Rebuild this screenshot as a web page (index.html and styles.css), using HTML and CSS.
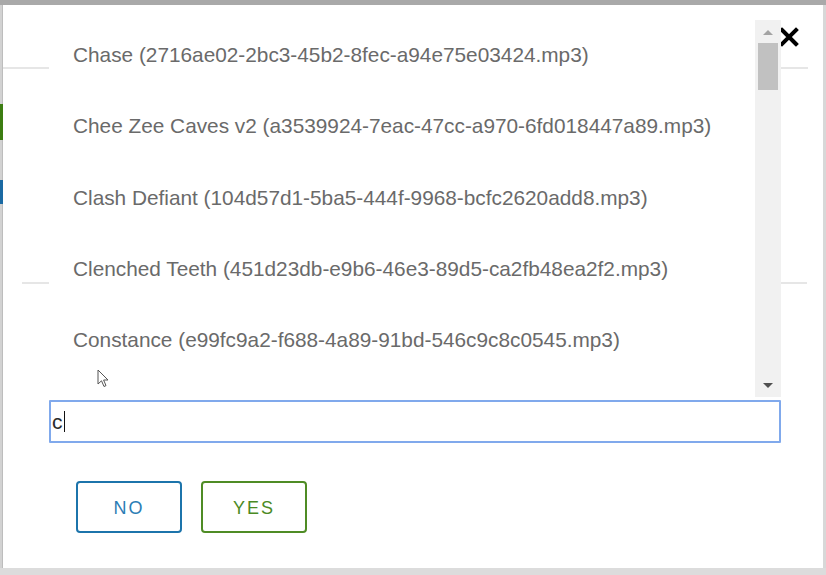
FILE: index.html
```html
<!DOCTYPE html>
<html lang="en">
<head>
<meta charset="utf-8">
<title>Select track</title>
<link rel="stylesheet" href="styles.css">
</head>
<body>
<div class="screen">
  <div class="edge edge-left">
    <span class="mark mark-green"></span>
    <span class="mark mark-blue"></span>
  </div>
  <div class="modal">
    <span class="rule rule-l1"></span>
    <span class="rule rule-l2"></span>
    <span class="rule rule-r1"></span>
    <span class="rule rule-r2"></span>
    <button class="close" aria-label="Close">
      <svg width="20" height="20" viewBox="0 0 20 20"><path d="M3 3 L17 17 M17 3 L3 17" stroke="#000" stroke-width="4" stroke-linecap="square" fill="none"/></svg>
    </button>
    <div class="listbox">
      <ul class="options">
        <li>Chase (2716ae02-2bc3-45b2-8fec-a94e75e03424.mp3)</li>
        <li>Chee Zee Caves v2 (a3539924-7eac-47cc-a970-6fd018447a89.mp3)</li>
        <li>Clash Defiant (104d57d1-5ba5-444f-9968-bcfc2620add8.mp3)</li>
        <li>Clenched Teeth (451d23db-e9b6-46e3-89d5-ca2fb48ea2f2.mp3)</li>
        <li>Constance (e99fc9a2-f688-4a89-91bd-546c9c8c0545.mp3)</li>
      </ul>
      <div class="scrollbar">
        <span class="arrow arrow-up"></span>
        <span class="thumb"></span>
        <span class="spacer"></span>
        <span class="arrow arrow-down"></span>
      </div>
    </div>
    <div class="search">c<span class="caret"></span></div>
    <div class="actions">
      <button class="btn btn-no">NO</button>
      <button class="btn btn-yes">YES</button>
    </div>
    <svg class="cursor" width="14" height="20" viewBox="0 0 14 20"><path d="M1 1 L1 15 L4.5 11.8 L7 17.5 L9 16.6 L6.6 11 L11 11 Z" fill="#fff" stroke="#555" stroke-width="1" stroke-linejoin="round"/></svg>
  </div>
  <div class="edge edge-right"></div>
</div>
</body>
</html>
```

FILE: styles.css
```css
html, body {
  margin: 0;
  padding: 0;
}
body {
  width: 826px;
  height: 575px;
  overflow: hidden;
  font-family: "Liberation Sans", Arial, sans-serif;
}
.screen {
  box-sizing: border-box;
  width: 826px;
  height: 575px;
  display: flex;
  background: #dcdcdc;
  border-top: 5px solid #a9a9a9;
  padding-bottom: 7px;
}
.edge {
  width: 3px;
  background: #d2d2d2;
  position: relative;
}
.edge-left {
  border-right: 1px solid #bdbdbd;
  width: 2px;
}
.edge-right {
  background: #d8d8d8;
}
.mark {
  position: absolute;
  left: 0;
  width: 3px;
}
.mark-green {
  top: 99px;
  height: 36px;
  background: #3c7d12;
}
.mark-blue {
  top: 175px;
  height: 24px;
  background: #1b6aa3;
}
.modal {
  flex: 1;
  background: #fff;
  position: relative;
  padding: 13px 42px 0 46px;
}
.rule {
  position: absolute;
  height: 2px;
  background: #e6e6e6;
}
.rule-l1 { top: 62px; left: 0; width: 46px; }
.rule-l2 { top: 277px; left: 19px; width: 27px; }
.rule-r1 { top: 62px; left: 778px; width: 27px; }
.rule-r2 { top: 277px; left: 778px; width: 26px; }
.close {
  position: absolute;
  top: 21px;
  left: 775px;
  width: 22px;
  height: 22px;
  padding: 1px;
  border: 0;
  background: transparent;
}
.listbox {
  position: relative;
  height: 379px;
  display: flex;
  background: #fff;
}
.options {
  list-style: none;
  margin: 0;
  padding: 1px 0 0 0;
  flex: 1;
  overflow: hidden;
}
.options li {
  height: 71.25px;
  line-height: 71.25px;
  padding-left: 24px;
  font-size: 20.8px;
  color: #6a6a6a;
  white-space: nowrap;
}
.scrollbar {
  width: 26px;
  background: #f1f1f1;
  display: flex;
  flex-direction: column;
  align-items: center;
  margin-top: 2px;
}
.arrow {
  width: 0;
  height: 0;
  border-left: 5px solid transparent;
  border-right: 5px solid transparent;
}
.arrow-up {
  margin-top: 10px;
  border-bottom: 5px solid #a3a3a3;
}
.arrow-down {
  margin-bottom: 9px;
  border-top: 5px solid #505050;
}
.thumb {
  margin-top: 8px;
  width: 20px;
  height: 47px;
  background: #c1c1c1;
}
.spacer { flex: 1; }
.search {
  box-sizing: border-box;
  margin-top: 3px;
  height: 43px;
  border: 2px solid #80a9ec;
  border-radius: 1px;
  padding-left: 1px;
  font-size: 21px;
  line-height: 39px;
  color: #2a2a2a;
  display: flex;
  align-items: center;
}
.caret {
  display: inline-block;
  width: 1px;
  height: 21px;
  background: #111;
  margin-left: 1px;
}
.actions {
  display: flex;
  gap: 19px;
  margin-top: 38px;
  padding-left: 27px;
}
.btn {
  box-sizing: border-box;
  width: 106px;
  height: 52px;
  background: #fff;
  border: 2px solid;
  border-radius: 4px;
  font-family: "Liberation Sans", Arial, sans-serif;
  font-size: 18px;
  letter-spacing: 2px;
  padding: 3px 0 0 0;
}
.btn-no {
  color: #2b7db5;
  border-color: #1c74ab;
}
.btn-yes {
  color: #4b8a24;
  border-color: #4f8c25;
}
.cursor {
  position: absolute;
  left: 94px;
  top: 364px;
}
```
